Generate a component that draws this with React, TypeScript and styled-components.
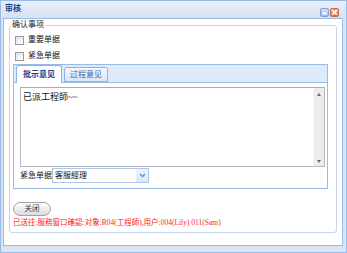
import styled, { createGlobalStyle } from "styled-components";

const GlobalStyle = createGlobalStyle`
  html, body {
    margin: 0;
    padding: 0;
    background: #ffffff;
  }
  body {
    font-family: "Liberation Serif", "Noto Sans CJK SC", serif;
    color: #000;
  }
  * {
    box-sizing: border-box;
  }
`;

const Window = styled.div`
  width: 347px;
  height: 253px;
  display: flex;
  flex-direction: column;
  border: 1px solid #99bbe8;
  background: #dae5f4;
`;

const TitleBar = styled.div`
  height: 17px;
  display: flex;
  align-items: flex-end;
  padding: 0 7px 1px 4px;
  background: linear-gradient(#e7eef8, #d6e2f2);
`;

const Title = styled.span`
  flex: 1;
  align-self: center;
  font-size: 8px;
  line-height: 10px;
  font-weight: bold;
  color: #15428b;
`;

const ToolButton = styled.span<{ $tone: "blue" | "orange" }>`
  width: 9px;
  height: 9px;
  margin-left: 1px;
  display: flex;
  align-items: center;
  justify-content: center;
  border-radius: 2px;
  border: 1px solid ${(p) => (p.$tone === "blue" ? "#7ba2d8" : "#c96a42")};
  background: ${(p) =>
    p.$tone === "blue"
      ? "linear-gradient(#d3e2f7, #94b8ea)"
      : "linear-gradient(#f5b08c, #dd6e42)"};
`;

const Body = styled.div`
  flex: 1;
  display: flex;
  flex-direction: column;
  margin: 0 3px 6px 2px;
  padding: 1px 5px 12px 5px;
  background: #ffffff;
  border: 1px solid #99bbe8;
`;

const Group = styled.fieldset`
  flex: 1;
  margin: 0;
  min-width: 0;
  padding: 2px 8px 0 3px;
  border: 1px solid #c3d4ec;
  border-radius: 3px;
`;

const Legend = styled.legend`
  margin-left: -2px;
  padding: 0 1px;
  font-size: 8px;
  line-height: 10px;
  color: #222;
`;

const CheckRow = styled.label`
  height: 16px;
  display: flex;
  align-items: center;
  gap: 4px;
  padding-left: 2px;
  font-size: 8px;
  line-height: 10px;
  color: #111;
`;

const Check = styled.span`
  width: 9px;
  height: 9px;
  border: 1px solid #9a9a9a;
  background: linear-gradient(135deg, #e4e4e4, #ffffff);
`;

const TabPanel = styled.div`
  width: 315px;
  display: flex;
  flex-direction: column;
`;

const TabStrip = styled.div`
  height: 19px;
  display: flex;
  align-items: flex-end;
  gap: 2px;
  padding-left: 2px;
  border: 1px solid #99bbe8;
  background: #deeafa;
`;

const Tab = styled.span<{ $active?: boolean }>`
  height: ${(p) => (p.$active ? "18px" : "15px")};
  margin-bottom: ${(p) => (p.$active ? "-1px" : "0")};
  width: ${(p) => (p.$active ? "46px" : "44px")};
  display: flex;
  align-items: center;
  justify-content: center;
  border: 1px solid #8db2e3;
  border-bottom: ${(p) => (p.$active ? "none" : "1px solid #8db2e3")};
  border-radius: 3px 3px 0 0;
  background: ${(p) =>
    p.$active ? "#ffffff" : "linear-gradient(#f4f8fd, #d9e6f6)"};
  font-size: 8px;
  line-height: 10px;
  font-weight: ${(p) => (p.$active ? "bold" : "normal")};
  color: ${(p) => (p.$active ? "#15428b" : "#416aa3")};
`;

const TabBody = styled.div`
  height: 106px;
  padding: 4px 2px 0 6px;
  border: 1px solid #99bbe8;
  border-top: none;
`;

const TextBox = styled.div`
  height: 80px;
  width: 305px;
  display: flex;
  border: 1px solid #b5b8c8;
  border-top-color: #a9abb6;
`;

const TextArea = styled.textarea`
  flex: 1;
  border: none;
  outline: none;
  resize: none;
  padding: 3px 2px;
  font-family: "Liberation Serif", "Noto Sans CJK SC", serif;
  font-size: 9px;
  line-height: 12px;
  color: #111;
  background: #ffffff;
`;

const ScrollTrack = styled.div`
  width: 11px;
  display: flex;
  flex-direction: column;
  justify-content: space-between;
  align-items: center;
  padding: 5px 0 3px;
  background: #ececec;
  border-left: 1px solid #f6f6f6;
`;

const Arrow = styled.span<{ $up?: boolean }>`
  width: 0;
  height: 0;
  border-left: 2px solid transparent;
  border-right: 2px solid transparent;
  ${(p) =>
    p.$up ? "border-bottom: 3px solid #6a6a6a;" : "border-top: 3px solid #6a6a6a;"}
`;

const FieldRow = styled.div`
  margin-top: 1px;
  height: 15px;
  display: flex;
  align-items: center;
`;

const FieldLabel = styled.span`
  width: 32px;
  font-size: 8px;
  line-height: 10px;
  color: #111;
`;

const Combo = styled.div`
  width: 97px;
  height: 15px;
  display: flex;
  border: 1px solid #b3c6e2;
  background: #ffffff;
`;

const ComboText = styled.span`
  flex: 1;
  padding-left: 2px;
  font-size: 8px;
  line-height: 13px;
  color: #111;
`;

const ComboTrigger = styled.span`
  width: 12px;
  display: flex;
  align-items: center;
  justify-content: center;
  background: linear-gradient(#eef4fc, #dbe7f7);
`;

const CloseButton = styled.button`
  display: block;
  margin-top: 13px;
  width: 38px;
  height: 14px;
  padding: 0;
  border: 1px solid #a3a3a3;
  border-radius: 7px;
  background: linear-gradient(#ffffff, #dcdcdc);
  font-family: "Liberation Serif", "Noto Sans CJK SC", serif;
  font-size: 7.5px;
  line-height: 12px;
  color: #333;
`;

const Status = styled.div`
  margin-top: 2px;
  font-size: 7.5px;
  line-height: 10px;
  color: #ff1a1a;
  white-space: nowrap;
`;

export default function App() {
  return (
    <>
      <GlobalStyle />
      <Window>
        <TitleBar>
          <Title>审核</Title>
          <ToolButton $tone="blue">
            <svg width="7" height="7" viewBox="0 0 7 7">
              <path d="M1 5.5 L1.8 3.6 Q3.5 2.4 5.2 3.6 L6 5.5 Z" fill="#fff" />
            </svg>
          </ToolButton>
          <ToolButton $tone="orange">
            <svg width="7" height="7" viewBox="0 0 7 7">
              <path d="M1.2 1.2 L5.8 5.8 M5.8 1.2 L1.2 5.8" stroke="#fff" strokeWidth="1.6" />
            </svg>
          </ToolButton>
        </TitleBar>
        <Body>
          <Group>
            <Legend>确认事项</Legend>
            <CheckRow>
              <Check />
              重要单据
            </CheckRow>
            <CheckRow>
              <Check />
              紧急单据
            </CheckRow>
            <TabPanel>
              <TabStrip>
                <Tab $active>批示意见</Tab>
                <Tab>过程意见</Tab>
              </TabStrip>
              <TabBody>
                <TextBox>
                  <TextArea defaultValue="已派工程師~~" />
                  <ScrollTrack>
                    <Arrow $up />
                    <Arrow />
                  </ScrollTrack>
                </TextBox>
                <FieldRow>
                  <FieldLabel>紧急单据</FieldLabel>
                  <Combo>
                    <ComboText>客服經理</ComboText>
                    <ComboTrigger>
                      <svg width="7" height="5" viewBox="0 0 7 5">
                        <path d="M1 1 L3.5 3.5 L6 1" fill="none" stroke="#5a8ad0" strokeWidth="1.3" />
                      </svg>
                    </ComboTrigger>
                  </Combo>
                </FieldRow>
              </TabBody>
            </TabPanel>
            <CloseButton type="button">关闭</CloseButton>
            <Status>已送往:服務窗口確認:对象:R04(工程師),用户:004(Lily) 011(Sam)</Status>
          </Group>
        </Body>
      </Window>
    </>
  );
}
